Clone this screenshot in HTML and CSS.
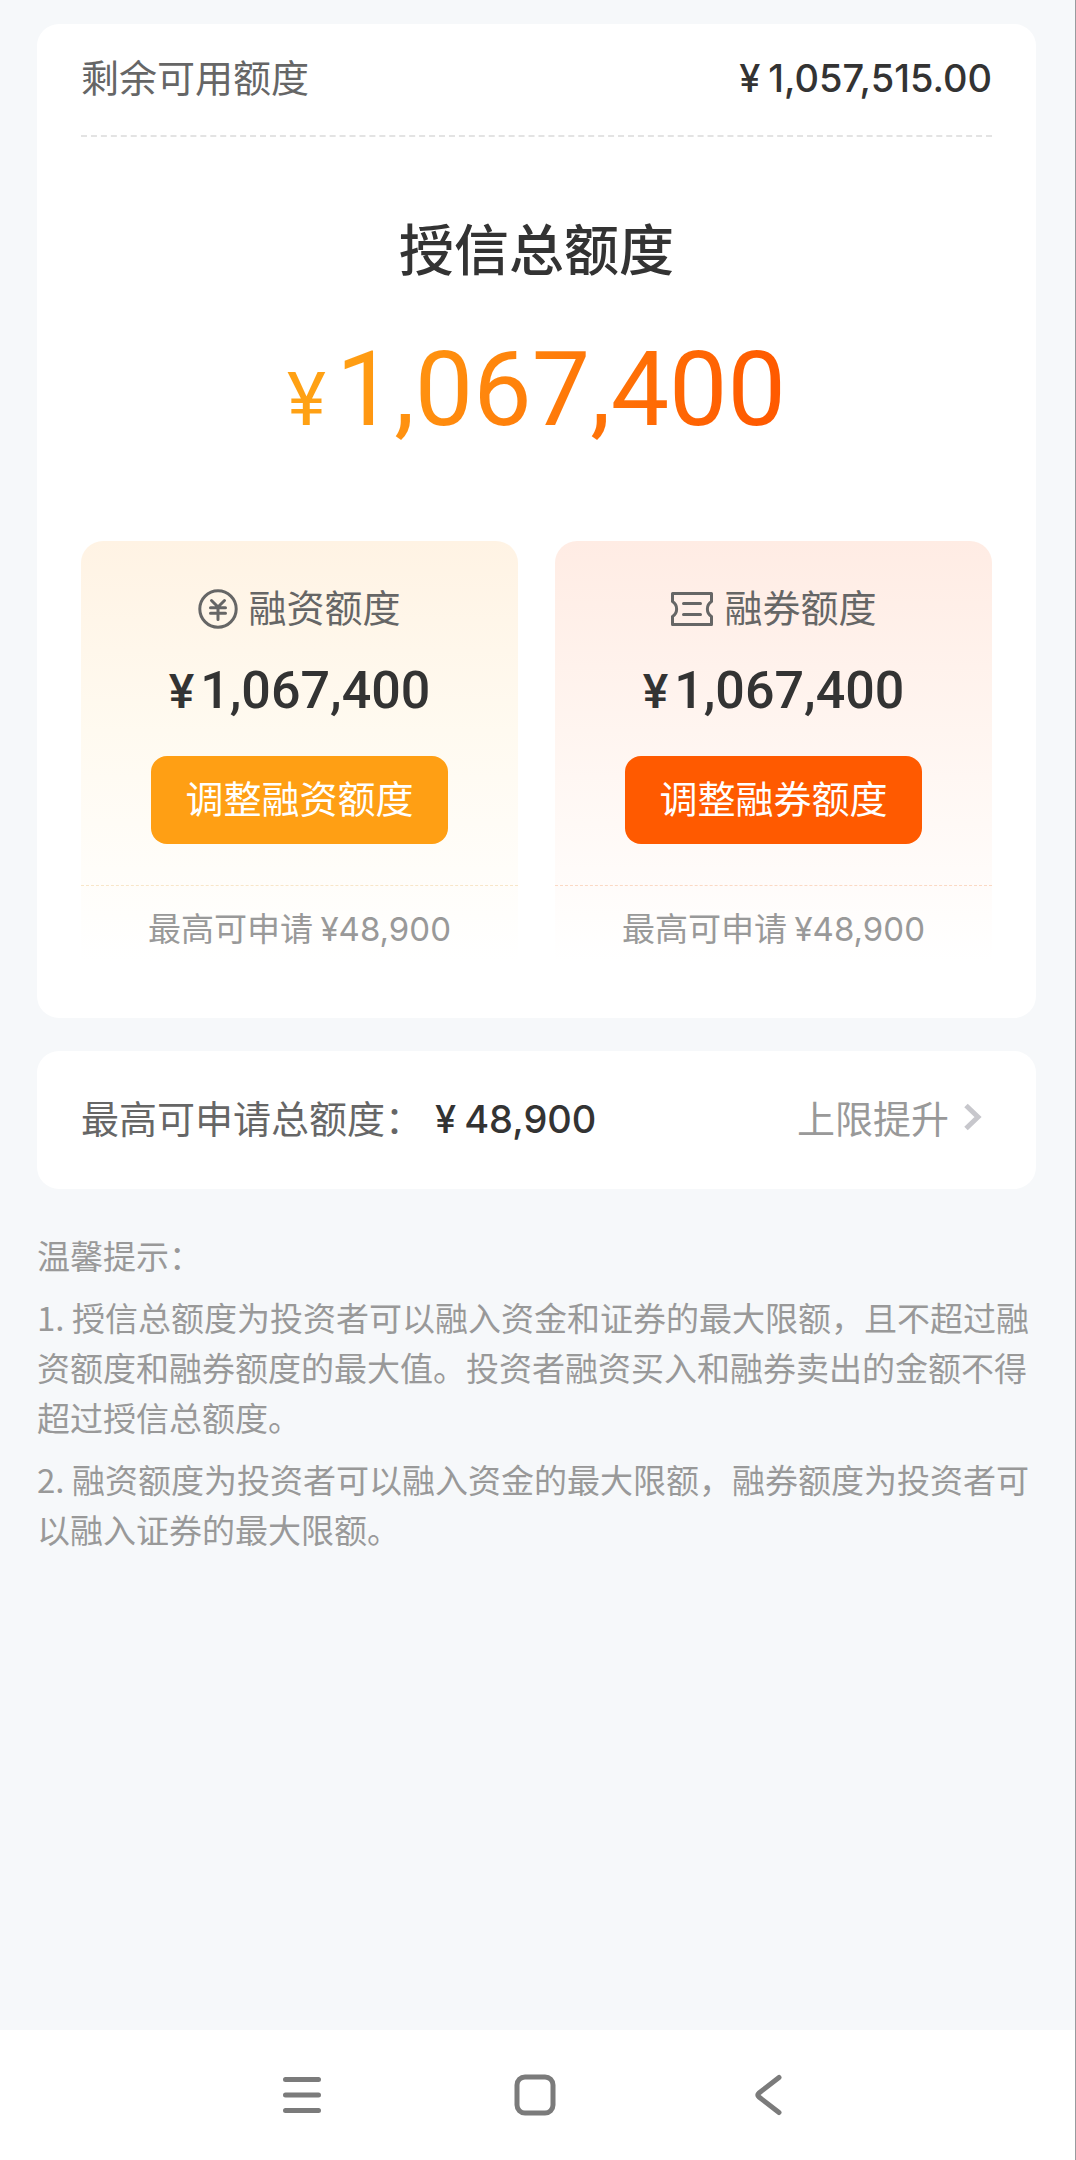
FILE: index.html
```html
<!DOCTYPE html>
<html lang="zh-CN">
<head>
<meta charset="UTF-8">
<meta name="viewport" content="width=device-width, initial-scale=1">
<title>授信总额度</title>
<link rel="stylesheet" href="styles.css">
</head>
<body>
<div class="page">
  <main class="content">
    <section class="card quota">
      <div class="remain">
        <span class="label">剩余可用额度</span>
        <span class="amount"><span class="yen">¥</span>1,057,515.00</span>
      </div>
      <div class="total">
        <h1 class="total-title">授信总额度</h1>
        <p class="total-amount"><span class="total-yen">¥</span>1,067,400</p>
      </div>
      <div class="panels">
        <article class="panel panel-fund">
          <h2 class="panel-title">
            <svg class="icon-coin" viewBox="0 0 40 40" aria-hidden="true"><circle cx="20" cy="20" r="18.2"/><path d="M13.500 11.500L20 18l6.500-6.500M12.500 18.800h15M12.500 24.300h15M20 18v12.500"/></svg>
            融资额度
          </h2>
          <p class="panel-amount"><span class="panel-yen">¥</span>1,067,400</p>
          <button class="adjust" type="button">调整融资额度</button>
          <p class="panel-foot">最高可申请 <span>¥48,900</span></p>
        </article>
        <article class="panel panel-stock">
          <h2 class="panel-title">
            <svg class="icon-ticket" viewBox="0 0 44 40" aria-hidden="true"><path d="M2.500 4.500H41.500V12.500C36 16 36 24 41.500 27.500V35.500H2.500V27.500C8 24 8 16 2.500 12.500ZM13.500 14.500h17M13.500 25.500h17"/></svg>
            融券额度
          </h2>
          <p class="panel-amount"><span class="panel-yen">¥</span>1,067,400</p>
          <button class="adjust" type="button">调整融券额度</button>
          <p class="panel-foot">最高可申请 <span>¥48,900</span></p>
        </article>
      </div>
    </section>

    <section class="card apply">
      <span class="label">最高可申请总额度：</span>
      <span class="amount"><span class="yen">¥</span>48,900</span>
      <a class="raise" href="#">上限提升
        <svg class="icon-next" viewBox="0 0 18 28" aria-hidden="true"><path d="M2 2.500L14 14 2 25.500"/></svg>
      </a>
    </section>

    <section class="tips">
      <p>温馨提示：</p>
      <p>1. 授信总额度为投资者可以融入资金和证券的最大限额，且不超过融资额度和融券额度的最大值。投资者融资买入和融券卖出的金额不得超过授信总额度。</p>
      <p>2. 融资额度为投资者可以融入资金的最大限额，融券额度为投资者可以融入证券的最大限额。</p>
    </section>
  </main>

  <nav class="navbar">
    <button type="button" aria-label="最近任务"><svg viewBox="0 0 44 44"><path d="M5.500 6.500h33M5.500 22h33M5.500 37.500h33"/></svg></button>
    <button type="button" aria-label="主屏幕"><svg viewBox="0 0 44 44"><rect x="4" y="4" width="36" height="36" rx="8"/></svg></button>
    <button type="button" aria-label="返回"><svg viewBox="0 0 44 44"><path d="M33 4.500L13 20Q10.500 22 13 24L33 39.500"/></svg></button>
  </nav>
</div>
</body>
</html>
```
FILE: styles.css
```css
* { box-sizing: border-box; }

body, h1, h2, p { margin: 0; }

body {
  font-family: "Noto Sans CJK SC", sans-serif;
  background: #f6f8fa;
  color: #333;
}

.page {
  display: flex;
  flex-direction: column;
  min-height: 100vh;
  border-right: 1px solid #999b9e;
}

.content {
  flex: 1;
  padding: 24px 39px 40px 37px;
}

.card {
  background: #fff;
  border-radius: 22px;
  padding: 0 44px;
}

.label { font-size: 38px; line-height: 56px; color: #666; }

.amount {
  font: 500 38px/56px Inter, sans-serif;
}

.yen { margin-right: 8px; }

/* total quota */
.quota { padding-bottom: 56px; }

.remain {
  display: flex;
  justify-content: space-between;
  align-items: baseline;
  padding: 24px 0 29px;
  border-bottom: 2px dashed #e3e3e3;
}

.total {
  display: flex;
  flex-direction: column;
  align-items: center;
  padding-top: 69px;
}

.total-title {
  font-size: 55px;
  font-weight: 500;
  line-height: 80px;
}

.total-amount {
  margin-top: 38px;
  font: 400 104px/132px Roboto, sans-serif;
  background: linear-gradient(110deg, #ffa114 10%, #ff5a00 92%);
  -webkit-background-clip: text;
  background-clip: text;
  color: transparent;
}

.total-yen { margin-right: 10px; font-size: 74px; line-height: 1; }

.panels {
  display: grid;
  grid-template-columns: 1fr 1fr;
  gap: 37px;
  margin-top: 85px;
}

.panel {
  display: flex;
  flex-direction: column;
  align-items: center;
  padding-top: 37px;
  border-radius: 22px 22px 0 0;
}

.panel-fund { background: linear-gradient(#fff3e4, #fffaf0 45%, #fff); }
.panel-stock { background: linear-gradient(#ffece4, #fff5f0 45%, #fff); }

.panel-title {
  display: flex;
  align-items: center;
  gap: 10px;
  font-size: 38px;
  font-weight: 400;
  line-height: 56px;
  color: #666;
}

.panel-title svg {
  height: 40px;
  margin-top: 6px;
  fill: none;
  stroke: #666;
  stroke-width: 3;
  stroke-linejoin: round;
  stroke-linecap: round;
}

.icon-coin { width: 40px; }
.icon-ticket { width: 44px; }

.panel-amount {
  margin-top: 25px;
  font: 500 52px/64px Roboto, sans-serif;
}

.panel-yen { margin-right: 6px; font-size: 48px; line-height: 1; }

.adjust {
  width: 297px;
  height: 88px;
  margin: 33px 0 41px;
  padding: 0 0 6px;
  border: 0;
  border-radius: 16px;
  font: 400 38px/56px "Noto Sans CJK SC", sans-serif;
  color: #fff;
}

.panel-fund .adjust { background: #ff9f14; }
.panel-stock .adjust { background: #ff5a00; }

.panel-foot {
  align-self: stretch;
  padding: 16px 0 10px;
  border-top: 1px dashed #f8e6c8;
  font-size: 33px;
  line-height: 50px;
  text-align: center;
  color: #999;
}

.panel-stock .panel-foot { border-color: #fbd9c4; }
.panel-foot span { font-family: Inter, sans-serif; line-height: 1; }

/* maximum that can be applied for */
.apply {
  display: flex;
  align-items: baseline;
  margin-top: 33px;
  padding-top: 38px;
  padding-bottom: 42px;
}

.apply .amount { margin-left: 12px; }

.raise {
  display: flex;
  align-items: center;
  gap: 15px;
  margin-left: auto;
  padding-right: 10px;
  font-size: 38px;
  line-height: 56px;
  color: #999;
  text-decoration: none;
}

.icon-next {
  width: 18px;
  height: 28px;
  fill: none;
  stroke: #c7c7cc;
  stroke-width: 5;
}

/* notes */
.tips {
  display: flex;
  flex-direction: column;
  gap: 12px;
  margin-top: 41px;
  font-size: 33px;
  line-height: 50px;
  color: #999;
}

/* system navigation */
.navbar {
  display: flex;
  justify-content: center;
  gap: 189px;
  padding: 43px 6px 43px 0;
  background: #fff;
}

.navbar button {
  width: 44px;
  height: 44px;
  padding: 0;
  border: 0;
  background: none;
}

.navbar svg {
  display: block;
  fill: none;
  stroke: #7b7b7b;
  stroke-width: 5;
  stroke-linecap: round;
}
```
